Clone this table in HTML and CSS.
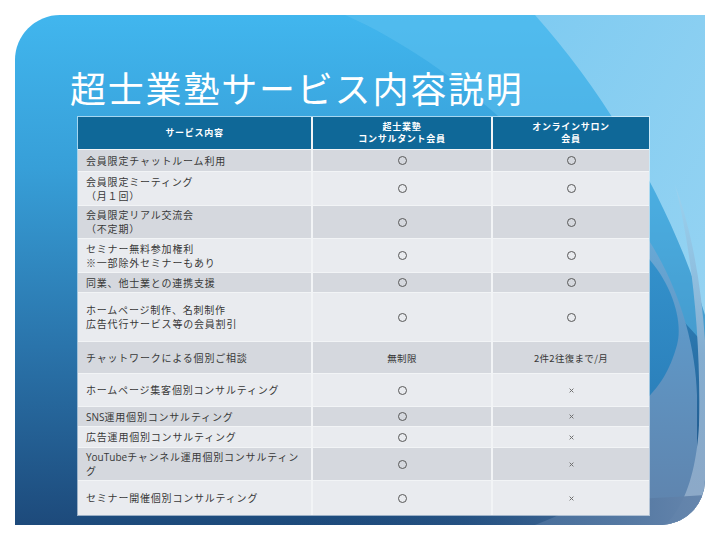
FILE: index.html
```html
<!DOCTYPE html>
<html lang="ja">
<head>
<meta charset="utf-8">
<title>超士業塾サービス内容説明</title>
<link rel="stylesheet" href="styles.css">
</head>
<body>
<div class="slide">
  <svg class="bg" viewBox="0 0 690 510" preserveAspectRatio="none" aria-hidden="true">
    <defs>
      <linearGradient id="gMain" x1="0" y1="0" x2="0" y2="1">
        <stop offset="0" stop-color="#41b6ee"/>
        <stop offset="0.3" stop-color="#379fd8"/>
        <stop offset="0.65" stop-color="#2a74ab"/>
        <stop offset="1" stop-color="#1d4a7b"/>
      </linearGradient>
      <linearGradient id="gSky" x1="0" y1="0" x2="1" y2="1">
        <stop offset="0" stop-color="#7fcbf1"/>
        <stop offset="1" stop-color="#95d3f2"/>
      </linearGradient>
      <linearGradient id="gSteel" x1="0" y1="0" x2="0" y2="1">
        <stop offset="0" stop-color="#6fb3de"/>
        <stop offset="0.45" stop-color="#5f97c6"/>
        <stop offset="1" stop-color="#5f82ab"/>
      </linearGradient>
      <linearGradient id="gDeep" x1="0" y1="0" x2="0" y2="1">
        <stop offset="0" stop-color="#3595cf"/>
        <stop offset="1" stop-color="#2b7fba"/>
      </linearGradient>
      <linearGradient id="gEdge" x1="0" y1="0" x2="0" y2="1">
        <stop offset="0" stop-color="#9bd3f0"/>
        <stop offset="0.5" stop-color="#84add0"/>
        <stop offset="1" stop-color="#8ea8c6"/>
      </linearGradient>
      <linearGradient id="gBottom" x1="0" y1="0" x2="1" y2="0">
        <stop offset="0" stop-color="#1d4a7b" stop-opacity="0"/>
        <stop offset="0.45" stop-color="#2d5888" stop-opacity="0.5"/>
        <stop offset="1" stop-color="#6686ad"/>
      </linearGradient>
    </defs>
    <rect x="0" y="0" width="690" height="510" fill="url(#gMain)"/>
    <path d="M330 0 C 420 40, 520 120, 600 230 L 690 330 L 690 0 Z" fill="#5fc1ef" opacity="0.5"/>
    <path d="M520 0 C 600 90, 660 200, 690 300 L 690 0 Z" fill="url(#gSky)"/>
    <path d="M590 170 C 650 230, 680 310, 682 380 L 682 510 L 520 510 C 600 480, 634 430, 634 385 Z" fill="url(#gSteel)"/>
    <path d="M600 215 C 650 245, 670 300, 662 330 C 655 355, 645 372, 625 390 Z" fill="url(#gDeep)"/>
    <path d="M660 170 C 690 250, 695 360, 690 420 L 690 510 L 650 510 C 672 490, 682 450, 684 410 C 686 330, 678 240, 660 170 Z" fill="url(#gEdge)"/>
    <path d="M250 510 C 400 495, 560 488, 690 480 L 690 510 Z" fill="url(#gBottom)"/>
  </svg>
  <div class="content">
    <h1 class="title">超士業塾サービス内容説明</h1>
    <div class="table">
      <div class="c h"><span>サービス内容</span></div>
      <div class="c h"><span>超士業塾<br>コンサルタント会員</span></div>
      <div class="c h"><span>オンラインサロン<br>会員</span></div>

      <div class="c d first"><span>会員限定チャットルーム利用</span></div>
      <div class="c d"><span class="o"></span></div>
      <div class="c d"><span class="o"></span></div>

      <div class="c l first"><span>会員限定ミーティング<br>（月１回）</span></div>
      <div class="c l"><span class="o"></span></div>
      <div class="c l"><span class="o"></span></div>

      <div class="c d first"><span>会員限定リアル交流会<br>（不定期）</span></div>
      <div class="c d"><span class="o"></span></div>
      <div class="c d"><span class="o"></span></div>

      <div class="c l first"><span>セミナー無料参加権利<br>※一部除外セミナーもあり</span></div>
      <div class="c l"><span class="o"></span></div>
      <div class="c l"><span class="o"></span></div>

      <div class="c d first"><span>同業、他士業との連携支援</span></div>
      <div class="c d"><span class="o"></span></div>
      <div class="c d"><span class="o"></span></div>

      <div class="c l first"><span>ホームページ制作、名刺制作<br>広告代行サービス等の会員割引</span></div>
      <div class="c l"><span class="o"></span></div>
      <div class="c l"><span class="o"></span></div>

      <div class="c d first"><span>チャットワークによる個別ご相談</span></div>
      <div class="c d small"><span>無制限</span></div>
      <div class="c d small"><span>2件2往復まで/月</span></div>

      <div class="c l first"><span>ホームページ集客個別コンサルティング</span></div>
      <div class="c l"><span class="o"></span></div>
      <div class="c l"><svg class="x" viewBox="0 0 5 5" aria-label="×"><path d="M0.6 0.6 L4.4 4.4 M4.4 0.6 L0.6 4.4"/></svg></div>

      <div class="c d first"><span><span class="lat">SNS</span>運用個別コンサルティング</span></div>
      <div class="c d"><span class="o"></span></div>
      <div class="c d"><svg class="x" viewBox="0 0 5 5" aria-label="×"><path d="M0.6 0.6 L4.4 4.4 M4.4 0.6 L0.6 4.4"/></svg></div>

      <div class="c l first"><span>広告運用個別コンサルティング</span></div>
      <div class="c l"><span class="o"></span></div>
      <div class="c l"><svg class="x" viewBox="0 0 5 5" aria-label="×"><path d="M0.6 0.6 L4.4 4.4 M4.4 0.6 L0.6 4.4"/></svg></div>

      <div class="c d first"><span><span class="lat">YouTube</span>チャンネル運用個別コンサルティン<br>グ</span></div>
      <div class="c d"><span class="o"></span></div>
      <div class="c d"><svg class="x" viewBox="0 0 5 5" aria-label="×"><path d="M0.6 0.6 L4.4 4.4 M4.4 0.6 L0.6 4.4"/></svg></div>

      <div class="c l first"><span>セミナー開催個別コンサルティング</span></div>
      <div class="c l"><span class="o"></span></div>
      <div class="c l"><svg class="x" viewBox="0 0 5 5" aria-label="×"><path d="M0.6 0.6 L4.4 4.4 M4.4 0.6 L0.6 4.4"/></svg></div>
    </div>
  </div>
</div>
</body>
</html>
```
FILE: styles.css
```css
html, body {
  margin: 0;
  padding: 0;
  background: #ffffff;
}
body {
  width: 720px;
  height: 540px;
  overflow: hidden;
  font-family: "Noto Sans CJK JP", "Noto Sans", sans-serif;
}
.slide {
  position: relative;
  margin: 15px;
  width: 690px;
  height: 510px;
  border-radius: 45px 0 45px 0;
  overflow: hidden;
}
.bg {
  position: absolute;
  left: 0;
  top: 0;
  width: 690px;
  height: 510px;
  display: block;
}
.content {
  position: relative;
  padding-top: 54px;
}
.title {
  margin: 0 0 0 55px;
  height: 36px;
  font-size: 36px;
  line-height: 36px;
  font-weight: 400;
  letter-spacing: 1.8px;
  color: #ffffff;
  white-space: nowrap;
}
.table {
  margin: 12px 0 0 63px;
  width: 571px;
  display: grid;
  grid-template-columns: 233px 178px 156px;
  grid-template-rows: 32px 21px 33px 32px 33px 19px 48px 31px 32px 19px 20px 32px 34px;
  column-gap: 2px;
  row-gap: 1px;
  background: #f2f4f6;
  box-shadow: 0 0 0 1px rgba(255, 255, 255, 0.55);
}
.c {
  display: flex;
  align-items: center;
  justify-content: center;
  text-align: center;
  font-size: 10px;
  line-height: 14px;
  letter-spacing: 0.8px;
  color: #383838;
  white-space: nowrap;
}
.c.first {
  justify-content: flex-start;
  text-align: left;
  padding-left: 8px;
}
.h {
  background: #0f6898;
  color: #ffffff;
  font-weight: 700;
  font-size: 9px;
  line-height: 12.5px;
  letter-spacing: 0.7px;
}
.d {
  background: #d5d8de;
}
.l {
  background: #e9ebef;
}
.small {
  font-size: 9.5px;
  letter-spacing: 0.3px;
}
.lat {
  font-family: "Open Sans", "Noto Sans", sans-serif;
  letter-spacing: 0;
}
.o {
  display: inline-block;
  width: 9px;
  height: 9px;
  box-sizing: border-box;
  border: 1.5px solid #585858;
  border-radius: 50%;
}
.x {
  display: block;
  width: 5px;
  height: 5px;
  stroke: #707070;
  stroke-width: 1;
  fill: none;
}
```
